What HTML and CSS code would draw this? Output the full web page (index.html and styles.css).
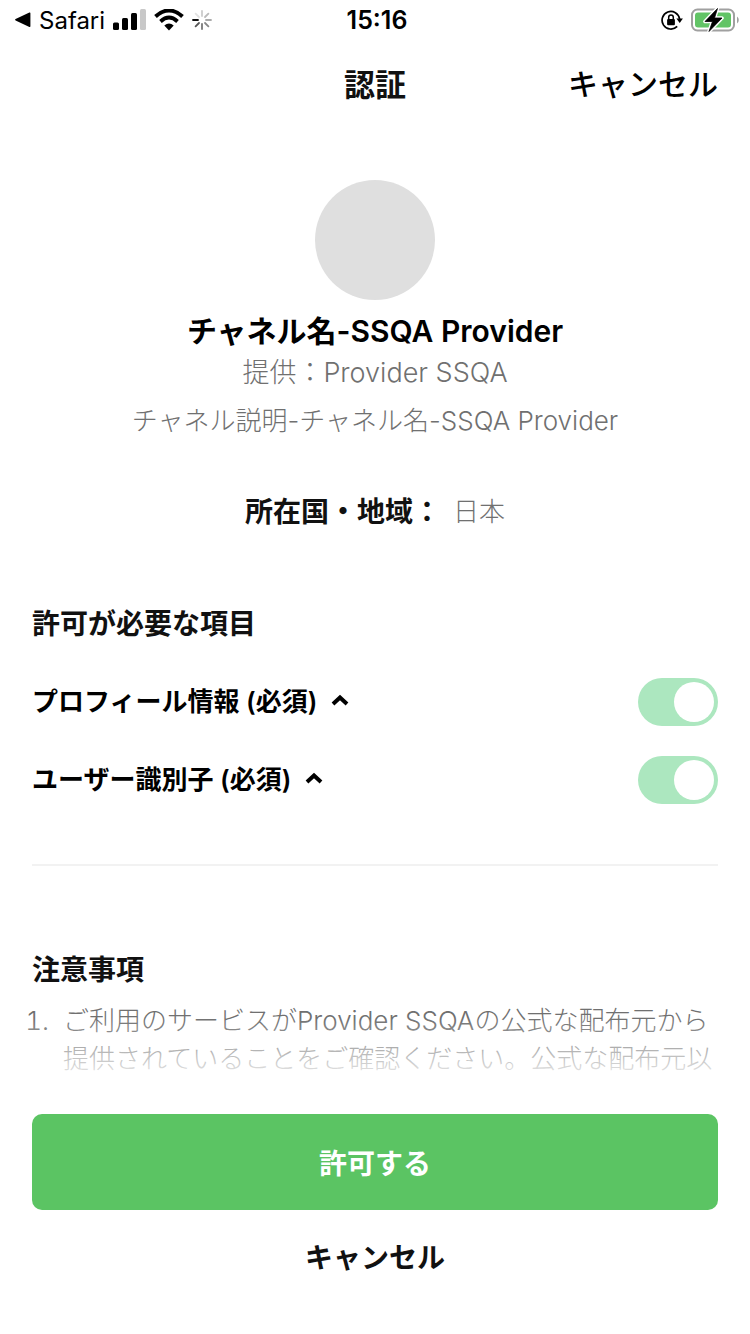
FILE: index.html
```
<!DOCTYPE html>
<html lang="ja">
<head>
<meta charset="utf-8">
<meta name="viewport" content="width=device-width, initial-scale=1">
<title>認証</title>
<link rel="stylesheet" href="styles.css">
</head>
<body>
<div class="screen">
  <div class="status">
    <div class="status-left">
      <svg class="icon-back" viewBox="0 0 16 16" width="16" height="16" aria-hidden="true"><path d="M14.400 .6Q15.400 .1 15.400 1.300V14.200Q15.400 15.300 14.400 14.900L.6 8.500Q-.4 7.800 .6 7.100Z"/></svg>
      <a class="back-app" href="#">Safari</a>
      <svg class="icon-signal" viewBox="0 0 33 22" width="33" height="22" aria-hidden="true">
        <rect x="0" y="13.500" width="6" height="7.500" rx="1.500"/>
        <rect x="9" y="9" width="6" height="12" rx="1.500"/>
        <rect x="18" y="4" width="6" height="17" rx="1.500"/>
        <rect x="27" y="0" width="6" height="21" rx="1.500" fill="#c8c8c8"/>
      </svg>
      <svg class="icon-wifi" viewBox="0 0 30 22" width="30" height="22" aria-hidden="true">
        <path d="M1.500 7.500Q15 -4.500 28.500 7.500" fill="none" stroke="#000" stroke-width="4"/>
        <path d="M6.500 12.500Q15 4.700 23.500 12.500" fill="none" stroke="#000" stroke-width="3.800"/>
        <path d="M10.300 16.400Q15 12.600 19.700 16.400L15 21.500Z"/>
      </svg>
      <svg class="icon-spinner" viewBox="0 0 20 20" width="20" height="20" fill="none" stroke-width="1.800" stroke-linecap="round" aria-hidden="true">
        <path d="M1 10H6" stroke="#111"/>
        <path d="M3.600 16.400L7 13" stroke="#555"/>
        <path d="M10 19V14" stroke="#777"/>
        <path d="M16.400 16.400L13 13" stroke="#888"/>
        <path d="M19 10H14" stroke="#aaa"/>
        <path d="M16.400 3.600L13 7" stroke="#bbb"/>
        <path d="M10 1V6" stroke="#ccc"/>
        <path d="M3.600 3.600L7 7" stroke="#e2e2e2"/>
      </svg>
    </div>
    <time class="clock">15:16</time>
    <div class="status-right">
      <svg class="icon-lock" viewBox="0 0 22 22" width="22" height="22" aria-hidden="true">
        <path d="M18.600 10A8.800 8.800 0 1 0 16.200 17.400" fill="none" stroke="#000" stroke-width="1.700"/>
        <path d="M15.400 9.400H21.900L18.700 13.900Z"/>
        <rect x="6.100" y="10" width="7.800" height="6.200" rx="1"/>
        <path d="M7.700 10.500V8.300a2.300 2.300 0 0 1 4.600 0V10.500" fill="none" stroke="#000" stroke-width="1.500"/>
      </svg>
      <svg class="icon-battery" viewBox="0 0 48 26" width="48" height="26" aria-hidden="true">
        <rect x="1" y="2.500" width="42" height="21" rx="5.500" fill="#fff" stroke="#a0a0a0" stroke-width="2"/>
        <rect x="4" y="5.500" width="36" height="15" rx="3" fill="#62c466"/>
        <path d="M46 9.500v7q1.800-1 1.800-3.500T46 9.500Z" fill="#a0a0a0"/>
        <path d="M26.500 1.500L14 14.500H21.500L18 24.500L31 11H23.500Z" stroke="#fff" stroke-width="3.600" stroke-linejoin="round"/>
        <path d="M26.500 1.500L14 14.500H21.500L18 24.500L31 11H23.500Z" stroke="#000" stroke-width=".8" stroke-linejoin="round"/>
      </svg>
    </div>
  </div>

  <header class="nav">
    <h1 class="nav-title">認証</h1>
    <button class="nav-cancel" type="button">キャンセル</button>
  </header>

  <main class="content">
    <section class="channel">
      <div class="avatar"></div>
      <h2 class="channel-name">チャネル名-SSQA Provider</h2>
      <p class="provider">提供：Provider SSQA</p>
      <p class="description">チャネル説明-チャネル名-SSQA Provider</p>
      <dl class="region">
        <dt class="region-label">所在国・地域：</dt>
        <dd class="region-value">日本</dd>
      </dl>
    </section>

    <section class="permissions">
      <h3 class="section-title">許可が必要な項目</h3>
      <div class="permission">
        <label class="permission-label" for="profile">プロフィール情報 (必須)</label>
        <button class="expand" type="button" aria-label="プロフィール情報の詳細"><svg viewBox="0 0 18 16" width="18" height="16" aria-hidden="true"><path d="M2 10L9 3.500L16 10" fill="none" stroke="#000" stroke-width="4"/></svg></button>
        <input class="switch" id="profile" type="checkbox" role="switch" checked>
      </div>
      <div class="permission">
        <label class="permission-label" for="identifier">ユーザー識別子 (必須)</label>
        <button class="expand" type="button" aria-label="ユーザー識別子の詳細"><svg viewBox="0 0 18 16" width="18" height="16" aria-hidden="true"><path d="M2 10L9 3.500L16 10" fill="none" stroke="#000" stroke-width="4"/></svg></button>
        <input class="switch" id="identifier" type="checkbox" role="switch" checked>
      </div>
    </section>

    <section class="notes">
      <h3 class="section-title">注意事項</h3>
      <ol class="note-list">
        <li>ご利用のサービスがProvider SSQAの公式な配布元から提供されていることをご確認ください。公式な配布元以</li>
      </ol>
    </section>
  </main>

  <footer class="actions">
    <button class="allow" type="button">許可する</button>
    <button class="cancel" type="button">キャンセル</button>
  </footer>
</div>
</body>
</html>
```
FILE: styles.css
```
@counter-style spaced-decimal {
  system: extends decimal;
  suffix: ".\a0\a0";
}

* {
  box-sizing: border-box;
}

body {
  margin: 0;
  background: #fff;
  color: #111;
  font-family: Inter, "Noto Sans CJK JP", sans-serif;
}

h1, h2, h3, p, dl, dd, ol {
  margin: 0;
  padding: 0;
}

button {
  padding: 0;
  border: 0;
  background: none;
  color: inherit;
  font: inherit;
  cursor: pointer;
}

svg {
  display: block;
  flex: none;
}

.screen {
  display: flex;
  flex-direction: column;
  min-height: 100vh;
}

/* Status bar */
.status {
  display: grid;
  grid-template-columns: 1fr auto 1fr;
  align-items: center;
  height: 40px;
  padding: 0 11px 0 15px;
  color: #000;
  font-size: 24px;
}

.status-left,
.status-right {
  display: flex;
  align-items: center;
  gap: 8px;
}

.status-right {
  justify-content: flex-end;
}

.back-app {
  color: inherit;
  text-decoration: none;
}

.clock {
  font-size: 25px;
  font-weight: 600;
}

/* Title bar */
.nav {
  display: grid;
  grid-template-columns: 1fr auto 1fr;
  align-items: center;
  height: 84px;
  padding: 0 32px;
}

.nav-title {
  grid-column: 2;
  font-size: 31px;
  font-weight: 700;
}

.nav-cancel {
  justify-self: end;
  color: #000;
  font-size: 30px;
  font-weight: 500;
}

/* Scrolling content */
.content {
  flex: 1;
  padding: 56px 32px 8px;
}

.channel {
  display: flex;
  flex-direction: column;
  align-items: center;
  text-align: center;
}

.avatar {
  width: 120px;
  height: 120px;
  border-radius: 50%;
  background: #dfdfdf;
}

.channel-name {
  margin-top: 8px;
  color: #000;
  font-size: 30px;
  font-weight: 600;
  line-height: 46px;
}

.provider,
.description,
.region-value,
.note-list {
  color: #707070;
  font-size: 26px;
  font-weight: 300;
  line-height: 38px;
}

.provider {
  font-size: 27px;
}

.description {
  margin-top: 10px;
}

.region {
  display: flex;
  align-items: center;
  gap: 12px;
  margin-top: 52px;
}

.region-label,
.section-title {
  font-size: 28px;
  font-weight: 700;
  line-height: 40px;
}

.permissions {
  margin-top: 72px;
  padding-bottom: 60px;
  border-bottom: 2px solid #f2f2f2;
}

.permission {
  display: flex;
  align-items: center;
  margin-top: 30px;
}

.section-title + .permission {
  margin-top: 34px;
}

.permission-label {
  color: #000;
  font-size: 26px;
  font-weight: 600;
  line-height: 40px;
}

.expand {
  margin-left: 14px;
}

.switch {
  flex: none;
  width: 80px;
  height: 48px;
  margin: 0 0 0 auto;
  padding: 4px;
  border-radius: 24px;
  appearance: none;
  background: #dfdfdf;
}

.switch::before {
  content: "";
  display: block;
  width: 40px;
  height: 40px;
  border-radius: 50%;
  background: #fff;
}

.switch:checked {
  background: #ace7bf;
}

.switch:checked::before {
  margin-left: auto;
}

.notes {
  padding-top: 84px;
}

.note-list {
  margin-top: 12px;
  padding-left: 31px;
  list-style-type: spaced-decimal;
}

/* Bottom actions */
.actions {
  position: sticky;
  bottom: 0;
  display: flex;
  flex-direction: column;
  padding: 28px 32px 32px;
  background: #fff;
}

.actions::before {
  content: "";
  position: absolute;
  right: 0;
  bottom: 100%;
  left: 0;
  height: 68px;
  background: linear-gradient(rgba(255, 255, 255, 0), #fff);
  pointer-events: none;
}

.allow,
.cancel {
  height: 96px;
  border-radius: 10px;
  font-size: 28px;
  font-weight: 700;
}

.allow {
  background: #5bc463;
  color: #fff;
}

.cancel {
  height: 92px;
}
```
